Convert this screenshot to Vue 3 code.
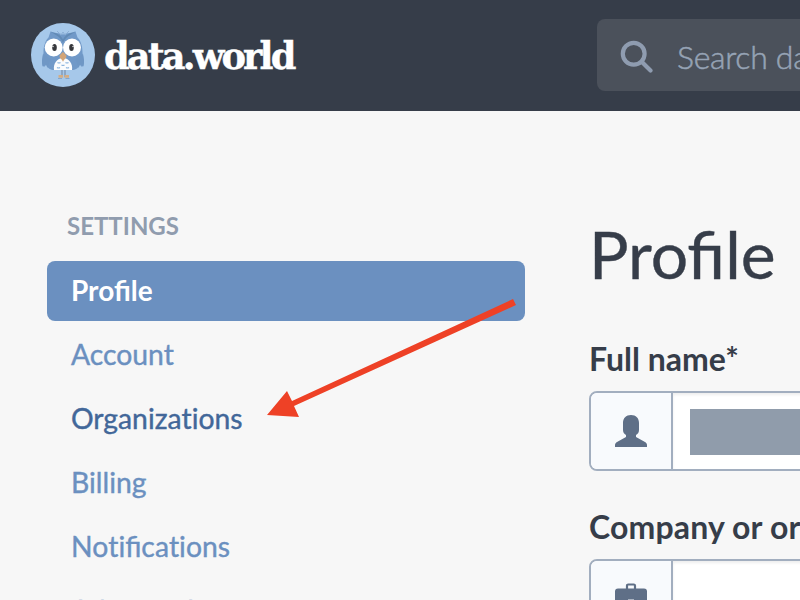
<script setup>
const items = [
  { label: ['Profile'], state: 'active' },
  { label: ['Account'] },
  { label: ['Organiza', 't', 'ions'], state: 'hovered' },
  { label: ['Billing'] },
  { label: ['No', 't', 'ifica', 't', 'ions'] },
  { label: ['Advanced'] },
]
</script>

<template>
  <div class="page">
    <header class="topbar">
      <div class="brand">
        <svg class="owl" viewBox="0 0 64 64" width="64" height="64">
          <circle cx="32" cy="32" r="32" fill="#a6c8ea" />
          <path d="M19.500 8.500c4 1.500 8 1.500 12.500 3 4.500-1.500 8.500-1.500 12.500-3l2 6c4 4 5 10 5 15l1 10c0 3-1 5-2 4l-2-2c-1 4-4 5.500-8 5.500H23.500c-4 0-7-1.500-8-5.500l-2 2c-1 1-2-1-2-4l1-10c0-5 1-11 5-15z" fill="#7199c8" />
          <path d="M12 31c-1 4-1.500 8-.5 12.500l3-3 2 4.500 3-9zM52 31c1 4 1.500 8 .5 12.500l-3-3-2 4.500-3-9z" fill="#6f97c5" />
          <path d="M19.500 8.500c5 2 9.500 2 12.500 8 3-6 7.500-6 12.500-8-3 3-8 3-12.500 11-4.500-8-9.500-8-12.500-11z" fill="#628ab5" />
          <path d="M26 8l4 4 2-3 2 3 4-4" fill="none" stroke="#8aadd5" stroke-width="1" />
          <path d="M23 47c-1-6 3-12 9-12s10 6 9 12z" fill="#fbfcfd" />
          <circle cx="22.700" cy="24.500" r="9" fill="#fff" />
          <circle cx="41" cy="24.500" r="9" fill="#fff" />
          <ellipse cx="23.500" cy="24.500" rx="2.300" ry="3.500" fill="#36383d" />
          <ellipse cx="40.500" cy="24.500" rx="2.300" ry="3.500" fill="#36383d" />
          <circle cx="22" cy="23.500" r=".7" fill="#fff" />
          <circle cx="42" cy="23.500" r=".7" fill="#fff" />
          <path d="M32 29c2 2 3.500 3 3.500 4.200 0 2-2.500 3-3.500 5.500-1-2.500-3.500-3.500-3.500-5.500 0-1.200 1.500-2.200 3.500-4.200z" fill="#d2a477" />
          <path d="M26.500 39.500q1.500 1 3 0M34.500 39.500q1.500 1 3 0M30.500 42q1.500 1 3 0M26 44.500q1.500 1 3 0M35 44.500q1.500 1 3 0" fill="none" stroke="#8db6df" stroke-width="1.200" />
          <path d="M31 47v7M34 47v7" stroke="#7d91aa" stroke-width="1.200" />
          <path d="M27.500 52h4.500v2.700h-4.500zM33.500 52h4.500v2.700h-4.500z" fill="#d3ad86" />
          <path d="M27 55.500h4M34.500 55.500h4" stroke="#82a6ce" stroke-width="1" />
        </svg>
        <svg class="wordmark" viewBox="0 0 200 50" width="200" height="50">
          <text transform="translate(0 34) scale(1.104 1)">data.world</text>
        </svg>
      </div>
      <div class="search">
        <svg viewBox="0 0 34 34" width="34" height="34">
          <circle cx="13.700" cy="14.700" r="10.900" fill="none" stroke="#8f9cb0" stroke-width="4.200" />
          <path d="M21.700 22.700l8.800 8.800" stroke="#8f9cb0" stroke-width="4.200" stroke-linecap="round" />
        </svg>
        <span>Search datasets</span>
      </div>
    </header>

    <main class="content">
      <nav class="sidebar">
        <h2>SETTINGS</h2>
        <a v-for="item in items" :key="item.label[0]" class="item" :class="item.state"><span v-for="(part, i) in item.label" :key="i" :class="{ plain: part === 't' }">{{ part }}</span></a>
      </nav>
      <section class="form">
        <h1>Profile</h1>
        <label>Full name*</label>
        <div class="field">
          <div class="addon">
            <svg viewBox="0 0 32 32" width="32" height="32">
              <path d="M16 0c5 0 8 3 8 8v7c0 2-1 4-3 5v2l9 5c1 .7 2 1.500 2 3v2H0v-2c0-1.500 1-2.300 2-3l9-5v-2c-2-1-3-3-3-5V8c0-5 3-8 8-8z" fill="#5f6f87" />
            </svg>
          </div>
          <div class="input"><div class="redacted"></div></div>
        </div>
        <label class="wide">Company or organization</label>
        <div class="field">
          <div class="addon">
            <svg viewBox="0 0 32 32" width="32" height="32">
              <path d="M12 7V2.800q0-1.300 1.300-1.300h5.400q1.300 0 1.300 1.300V7" fill="none" stroke="#5f6f87" stroke-width="2.200" />
              <path d="M3 5.500h26q3 0 3 3V18H19v-1.500h-6V18H0V8.500q0-3 3-3zM0 20h13v2h6v-2h13v7q0 3-3 3H3q-3 0-3-3z" fill="#5f6f87" />
            </svg>
          </div>
          <div class="input"></div>
        </div>
      </section>
    </main>
  </div>
</template>

<style>
body { overflow: hidden; }
</style>

<style scoped>
* { box-sizing: border-box; }
.page {
  width: 800px;
  height: 600px;
  overflow: hidden;
  background: #f7f7f7;
  color: #363d49;
  font-family: Lato, sans-serif;
}
.topbar {
  height: 111px;
  padding: 19px 0 0 31px;
  display: flex;
  justify-content: space-between;
  background: #363d49;
}
.brand { display: flex; align-items: flex-start; gap: 9px; padding-top: 4px; }
.wordmark { margin-top: 12px; overflow: visible; }
.wordmark text {
  font: bold 37px "DejaVu Serif Condensed", "DejaVu Serif", serif;
  letter-spacing: -2.6px;
  fill: #fff;
  stroke: #fff;
  stroke-width: .4px;
}
.search {
  width: 203px;
  height: 72px;
  padding: 2px 0 0 23px;
  display: flex;
  align-items: center;
  gap: 23px;
  overflow: hidden;
  border-radius: 8px 0 0 8px;
  background: #4b515b;
  color: #96a3b5;
  font-size: 32px;
  font-weight: 300;
  letter-spacing: -.3px;
  white-space: nowrap;
  -webkit-text-stroke: .5px #96a3b5;
}
.search svg { flex: none; }
.content { display: flex; gap: 64px; padding-left: 47px; }
.sidebar {
  width: 478px;
  flex: none;
  display: flex;
  flex-direction: column;
  gap: 4px;
  padding-top: 98px;
}
h2 {
  margin: 0;
  height: 48px;
  padding-left: 20px;
  font-size: 24px;
  line-height: 34px;
  font-weight: 700;
  color: #909cae;
}
.item {
  height: 60px;
  flex: none;
  padding-left: 24px;
  border-radius: 8px;
  font-size: 28.3px;
  line-height: 58px;
  color: #6b90c0;
  -webkit-text-stroke: .4px currentColor;
}
.plain { font-variant-ligatures: none; }
.active { background: #6b90c0; color: #fff; font-size: 28px; font-weight: 700; -webkit-text-stroke: 0; }
.hovered { color: #426799; }
.form { width: 300px; flex: none; padding-top: 105px; }
h1 {
  margin: 0 0 47px;
  font-size: 66px;
  line-height: 76px;
  font-weight: 400;
  -webkit-text-stroke: .4px currentColor;
}
label {
  display: block;
  height: 52px;
  font-size: 32px;
  line-height: 40px;
  font-weight: 700;
  white-space: nowrap;
}
.wide { letter-spacing: .15px; }
.field {
  display: flex;
  height: 80px;
  margin-bottom: 36px;
  border: 2px solid #a2aebf;
  border-radius: 8px;
  overflow: hidden;
  background: #fff;
}
.addon {
  width: 82px;
  flex: none;
  display: flex;
  align-items: center;
  justify-content: center;
  border-right: 2px solid #a2aebf;
  background: #f8fafd;
}
.input { flex: 1; padding: 16px 0 0 17px; box-shadow: inset 0 2px 3px #eee; }
.redacted { height: 46px; background: #909cab; }

/* Callout arrow laid over the menu */
.page::after {
  content: "";
  position: absolute;
  left: 267px;
  top: 299px;
  width: 249px;
  height: 119px;
  background: #ee4126;
  clip-path: polygon(0 116px, 20px 92px, 25px 102px, 246px 0, 249px 6px, 27px 107px, 32px 118px);
}
</style>
